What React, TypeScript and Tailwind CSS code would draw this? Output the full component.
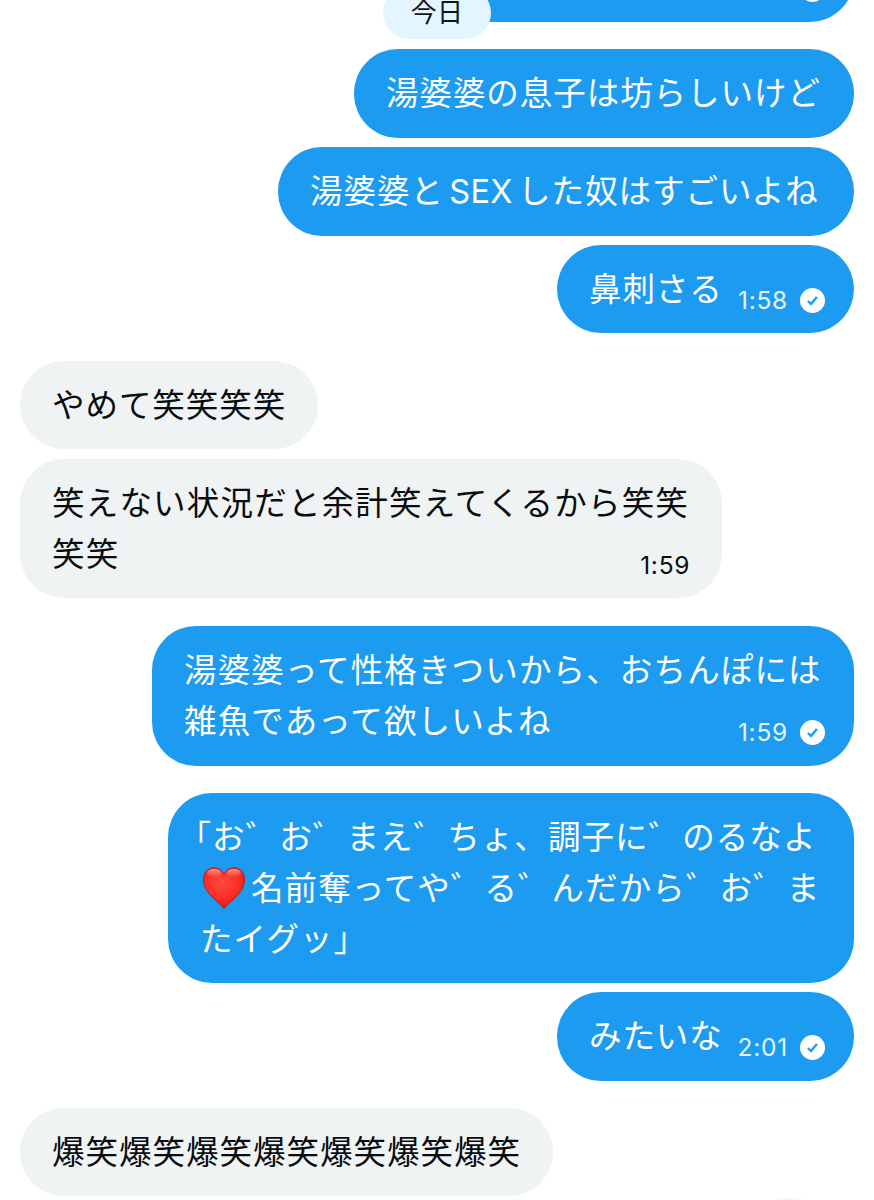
import type { ReactNode } from "react";

function SentIcon() {
  return (
    <svg viewBox="0 0 25 25" className="h-[25px] w-[25px] shrink-0" aria-hidden="true">
      <circle cx="12.5" cy="12.5" r="12.5" fill="#ffffff" />
      <path d="M7.9 13 11 16 16.900 9" fill="none" stroke="#1d9bf0" strokeWidth="2.3" />
    </svg>
  );
}

function Heart() {
  return (
    <svg viewBox="0 0 42 42" className="ml-[3px] mr-[6px] mt-[3px] h-[42px] w-[42px] shrink-0" aria-hidden="true">
      <defs>
        <radialGradient id="heart" cx="0.45" cy="0.35" r="0.7">
          <stop offset="0" stopColor="#ff4a3f" />
          <stop offset="0.55" stopColor="#fb3028" />
          <stop offset="1" stopColor="#dd1410" />
        </radialGradient>
        <linearGradient id="gloss" x1="0" y1="0" x2="0" y2="1">
          <stop offset="0" stopColor="#ffc4bc" stopOpacity="0.75" />
          <stop offset="1" stopColor="#ff6b60" stopOpacity="0.1" />
        </linearGradient>
      </defs>
      <path
        d="M21 41.5C18.500 38 12.500 33.800 7.500 28.200C3.200 23.300 0.500 18.500 0.500 12.200C0.500 5.500 5 0.800 11 0.800C15.500 0.800 19.200 3.300 21 7.300C22.800 3.300 26.500 0.800 31 0.800C37 0.800 41.500 5.500 41.500 12.200C41.500 18.500 38.800 23.300 34.500 28.200C29.500 33.800 23.500 38 21 41.500Z"
        fill="url(#heart)"
        stroke="#b0201f"
        strokeWidth="1"
      />
      <ellipse cx="11" cy="6.200" rx="6.800" ry="4.200" fill="url(#gloss)" />
      <ellipse cx="31" cy="6.200" rx="6.800" ry="4.200" fill="url(#gloss)" />
    </svg>
  );
}

type BubbleProps = {
  side: "me" | "them";
  className: string;
  lines: ReactNode[];
  time?: string;
  sent?: boolean;
};

function Bubble({ side, className, lines, time, sent }: BubbleProps) {
  const mine = side === "me";
  return (
    <div
      className={`flex shrink-0 justify-between rounded-[44px] pt-[16.8px] pb-[18.8px] pl-8 ${
        mine ? "self-end bg-[#1d9bf0] pr-[29px] text-white" : "self-start bg-[#eff3f4] pr-8 text-[#0a0d10]"
      } ${className}`}
    >
      <div className="w-0 whitespace-nowrap text-[32.5px] leading-[50.8px]">
        {lines.map((line, i) => (
          <div key={i}>{line}</div>
        ))}
      </div>
      {(time || sent) && (
        <div className="mb-[1.7px] flex h-[25px] items-center gap-[12px] self-end font-['Inter',sans-serif] text-[24.5px] leading-[25px] tracking-[0.75px]">
          {time && <span className={mine ? "text-[#e6f4fd]" : "-mr-[0.75px]"}>{time}</span>}
          {sent && <SentIcon />}
        </div>
      )}
    </div>
  );
}

export default function App() {
  return (
    <main
      lang="ja"
      className="relative flex h-[1200px] w-[874px] flex-col overflow-hidden bg-white px-5 font-['Noto_Sans_CJK_JP',sans-serif]"
    >
      <Bubble side="me" className="mt-[-66.3px] h-[88.3px] w-[450px]" lines={[]} sent />
      <Bubble
        side="me"
        className="mt-[27.4px] h-[88.3px] w-[500px] tracking-[0.95px]"
        lines={["湯婆婆の息子は坊らしいけど"]}
      />
      <Bubble
        side="me"
        className="mt-[9.6px] h-[88.3px] w-[576px] tracking-[1px]"
        lines={[
          <>
            湯婆婆と
            <span className="inline-block w-[74px] text-center font-['Inter',sans-serif] tracking-[0.4px]">SEX</span>
            した奴はすごいよね
          </>,
        ]}
      />
      <Bubble side="me" className="mt-[9.6px] h-[88.3px] w-[297px] tracking-[0.9px]" lines={["鼻刺さる"]} time="1:58" sent />
      <Bubble side="them" className="mt-[27.7px] h-[88.3px] w-[298px] tracking-[0.95px]" lines={["やめて笑笑笑笑"]} />
      <Bubble
        side="them"
        className="mt-[9.6px] h-[139.4px] w-[701.5px] tracking-[1.2px]"
        lines={["笑えない状況だと余計笑えてくるから笑笑", "笑笑"]}
        time="1:59"
      />
      <Bubble
        side="me"
        className="mt-[27.7px] h-[139.8px] w-[702px] tracking-[1.15px]"
        lines={["湯婆婆って性格きついから、おちんぽには", "雑魚であって欲しいよね"]}
        time="1:59"
        sent
      />
      <Bubble
        side="me"
        className="mt-[27.5px] h-[189.3px] w-[686px] tracking-[1.08px]"
        lines={[
          <span className="-ml-[21.5px]">「お゛お゛まえ゛ちょ、調子に゛のるなよ</span>,
          <span className="flex h-[50.8px] items-center">
            <Heart />
            名前奪ってや゛る゛んだから゛お゛ま
          </span>,
          "たイグッ」",
        ]}
      />
      <Bubble side="me" className="mt-[9.6px] h-[88.3px] w-[297px] tracking-[0.9px]" lines={["みたいな"]} time="2:01" sent />
      <Bubble
        side="them"
        className="mt-[27.4px] h-[88.3px] w-[533px] tracking-[1px]"
        lines={["爆笑爆笑爆笑爆笑爆笑爆笑爆笑"]}
      />

      <div className="absolute left-[383px] top-[-13px] flex h-[52px] w-[108px] items-center justify-center rounded-full bg-[#e3f6ff] pb-[4px] text-[26px] leading-none tracking-[0.2px] text-[#0f1419]">
        今日
      </div>
      <div className="absolute left-[747px] top-[1202px] h-[84px] w-[84px] rounded-full bg-white shadow-[0_0_5px_rgba(0,0,0,0.35)]" />
    </main>
  );
}
